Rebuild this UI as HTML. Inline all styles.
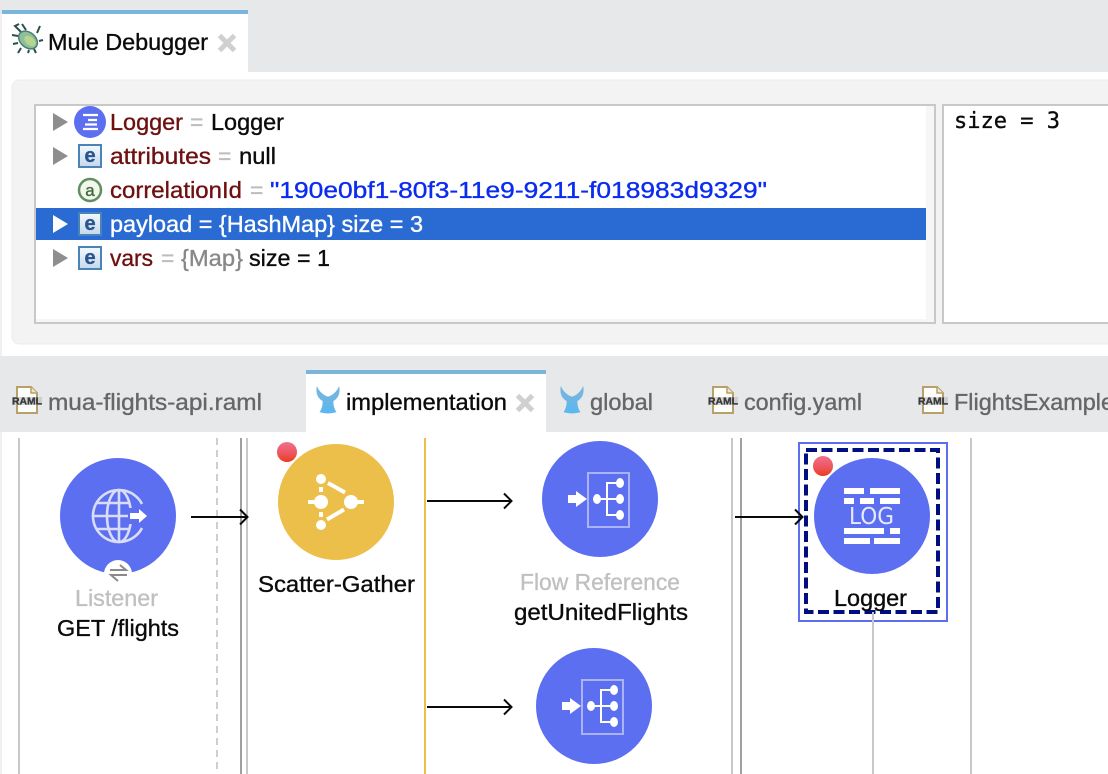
<!DOCTYPE html>
<html><head><meta charset="utf-8"><title>Mule Debugger</title>
<style>
html,body{margin:0;padding:0;background:#fff;width:1108px;height:774px;overflow:hidden}
svg{display:block}
text{font-family:"Liberation Sans",sans-serif;font-size:23px;white-space:pre;fill:currentColor;stroke:currentColor;stroke-width:.35px;color:#0b0b0b}
.k{color:#6e1010}.q{color:#bdbdbd}.b{color:#0b0b0b}.g{color:#666}.w{color:#fff}.s{color:#0b2cf0}.m{color:#888}.l{color:#c0c0c0}
</style></head><body>
<svg xmlns="http://www.w3.org/2000/svg" width="1108" height="774" viewBox="0 0 1108 774">
<defs>
<linearGradient id="mg" x1="0" y1="0" x2="0" y2="1"><stop offset="0" stop-color="#7fb4d8"/><stop offset="1" stop-color="#58b8f2"/></linearGradient>
<linearGradient id="rd" x1="0" y1="0" x2="0" y2="1"><stop offset="0" stop-color="#f07090"/><stop offset=".55" stop-color="#ee5560"/><stop offset="1" stop-color="#ea3a20"/></linearGradient>
<linearGradient id="eg" x1="0" y1="0" x2="0" y2="1"><stop offset="0" stop-color="#f4f8fc"/><stop offset="1" stop-color="#c4d8ea"/></linearGradient>
<g id="e"><rect x="1" y="1" width="22" height="22" fill="url(#eg)" stroke="#4a82ba" stroke-width="2"/><text x="12" y="18" text-anchor="middle" style="font-size:20px;font-weight:bold;color:#2a5590">e</text></g>
<g id="raml"><path d="M5 1H19L25 7V27H5Z" fill="#fdfdfb" stroke="#b8a068" stroke-width="2"/><path d="M19 1V7H25" fill="#eee4c8" stroke="#b8a068" stroke-width="1.500"/><rect x="0" y="11" width="30" height="8" fill="#b8b8b8" opacity=".55"/><text x="0" y="18.500" textLength="30" lengthAdjust="spacingAndGlyphs" style="font-size:10px;font-weight:bold;color:#3a3a3a">RAML</text></g>
<path id="mule" d="M1 0C0 6 2 11 7 14C7 18 6 22 4 25C9 26.500 15 26.500 20 25C18 22 17 18 17 14C22 11 24 6 23 0C21 5 16 9 12 10C8 9 3 5 1 0Z" fill="url(#mg)" stroke="#6fb4e2" stroke-width=".6"/>
<g id="fr">
<circle cx="0" cy="0" r="58" fill="#5c6ff0"/>
<rect x="-12" y="-26" width="41" height="54" fill="none" stroke="#a9b3f6" stroke-width="2"/>
<path d="M-32 -4H-24V-8L-13 0L-24 8V4H-32Z" fill="#fff"/>
<path d="M-3 0H20M7 0V-16H20M7 0V16H20" fill="none" stroke="#fff" stroke-width="2"/>
<ellipse cx="-3" cy="0" rx="4" ry="5" fill="#fff"/><ellipse cx="20" cy="-16" rx="4" ry="5" fill="#fff"/><ellipse cx="20" cy="0" rx="4" ry="5" fill="#fff"/><ellipse cx="20" cy="16" rx="4" ry="5" fill="#fff"/>
</g>
</defs>

<!-- top tab bar -->
<rect x="0" y="0" width="1108" height="72" fill="#e7e8ea"/>
<rect x="2" y="10" width="246" height="62" fill="#fff"/>
<rect x="2" y="10" width="246" height="4" fill="#7ab5dc"/>
<rect x="0" y="14" width="2" height="342" fill="#f0f0f0"/>
<g transform="translate(28,40)">
<path d="M-7 -8L-13 -14L-9 -16M-10 -4L-16 -5M9 -7L12 -14M-10 3L-15 4M11 1L15 0M-7 8L-10 13M6 9L8 13M-2 -10L-6 -16M1 10L0 13" stroke="#2b4f4c" stroke-width="2" fill="none"/>
<ellipse cx="0" cy="0" rx="10.500" ry="7.500" transform="rotate(40)" fill="#8fbf9a" stroke="#4a7f78" stroke-width="1.500"/>
<ellipse cx="2" cy="1" rx="6.500" ry="4" transform="rotate(40 2 1)" fill="#b5d68c"/>
</g>
<text x="48" y="50" textLength="160" lengthAdjust="spacingAndGlyphs" class="b">Mule Debugger</text>
<path d="M219.500 35.500L234.500 50.500M234.500 35.500L219.500 50.500" stroke="#d0d0d0" stroke-width="5"/>

<!-- debugger panel -->
<rect x="12" y="80" width="1110" height="264" rx="7" fill="#f3f3f3" stroke="#ececec"/>
<rect x="35" y="105" width="900" height="218" fill="#fff" stroke="#c8c8c8" stroke-width="2"/>
<rect x="926" y="106" width="8" height="216" fill="#f6f6f6"/>
<rect x="36" y="319" width="898" height="3" fill="#f6f6f6"/>
<rect x="943" y="105" width="180" height="218" fill="#fff" stroke="#c8c8c8" stroke-width="2"/>
<rect x="36" y="208" width="890" height="32" fill="#2a6bd3"/>

<!-- tree -->
<path d="M53 113L68 122L53 131Z" fill="#8e8e8e"/>
<path d="M53 147L68 156L53 165Z" fill="#8e8e8e"/>
<path d="M53 215L68 224L53 233Z" fill="#fff"/>
<path d="M53 249L68 258L53 267Z" fill="#8e8e8e"/>

<circle cx="90" cy="122" r="16" fill="#5c6ff0"/>
<path d="M83 115H98M88 120H97M85 124.500H97M83 129H98" stroke="#fff" stroke-width="2.200" fill="none"/>
<use href="#e" x="78" y="144"/>
<circle cx="90" cy="190" r="11" fill="#f2f6ec" stroke="#5f8f5f" stroke-width="2.500"/>
<text x="90" y="196" text-anchor="middle" style="font-size:17px;color:#3d6a3d">a</text>
<use href="#e" x="78" y="212"/>
<use href="#e" x="78" y="246"/>

<text x="110" y="130" textLength="73" lengthAdjust="spacingAndGlyphs" class="k">Logger</text>
<text x="190" y="130" class="q">=</text>
<text x="211" y="130" textLength="73" lengthAdjust="spacingAndGlyphs" class="b">Logger</text>

<text x="110" y="164" textLength="101" lengthAdjust="spacingAndGlyphs" class="k">attributes</text>
<text x="218" y="164" class="q">=</text>
<text x="239" y="164" textLength="37" lengthAdjust="spacingAndGlyphs" class="b">null</text>

<text x="110" y="198" textLength="132" lengthAdjust="spacingAndGlyphs" class="k">correlationId</text>
<text x="250" y="198" class="q">=</text>
<text x="270" y="198" textLength="497" lengthAdjust="spacingAndGlyphs" class="s">"190e0bf1-80f3-11e9-9211-f018983d9329"</text>

<text x="110" y="232" textLength="313" lengthAdjust="spacingAndGlyphs" class="w">payload = {HashMap} size = 3</text>

<text x="110" y="266" textLength="43" lengthAdjust="spacingAndGlyphs" class="k">vars</text>
<text x="161" y="266" class="q">=</text>
<text x="181" y="266" textLength="62" lengthAdjust="spacingAndGlyphs" class="m">{Map}</text>
<text x="249" y="266" textLength="81" lengthAdjust="spacingAndGlyphs" class="b">size = 1</text>

<text x="954" y="128" style="font-family:'DejaVu Sans Mono','Liberation Mono',monospace;font-size:22px" class="b">size = 3</text>

<!-- editor tabs -->
<rect x="0" y="356" width="1108" height="76" fill="#e7e8ea"/>
<rect x="306" y="370" width="240" height="62" fill="#fff"/>
<rect x="306" y="370" width="240" height="4" fill="#7ab5dc"/>
<use href="#raml" x="12" y="386"/>
<text x="48" y="410" textLength="214" lengthAdjust="spacingAndGlyphs" class="g">mua-flights-api.raml</text>
<use href="#mule" x="316" y="387"/>
<text x="346" y="410" textLength="161" lengthAdjust="spacingAndGlyphs" class="b">implementation</text>
<path d="M517.500 395.500L532.500 410.500M532.500 395.500L517.500 410.500" stroke="#d0d0d0" stroke-width="5"/>
<use href="#mule" x="560" y="387"/>
<text x="590" y="410" textLength="63" lengthAdjust="spacingAndGlyphs" class="g">global</text>
<use href="#raml" x="708" y="386"/>
<text x="744" y="410" textLength="118" lengthAdjust="spacingAndGlyphs" class="g">config.yaml</text>
<use href="#raml" x="918" y="386"/>
<text x="954" y="410" textLength="160" lengthAdjust="spacingAndGlyphs" class="g">FlightsExample</text>

<!-- canvas lines -->
<rect x="0" y="432" width="2" height="342" fill="#efefef"/>
<rect x="18" y="438" width="2" height="336" fill="#c8c8c8"/>
<path d="M217 438V774" stroke="#cfcfcf" stroke-width="2" stroke-dasharray="7 5"/>
<rect x="240" y="438" width="2" height="336" fill="#a0a0a0"/>
<rect x="246" y="438" width="2" height="336" fill="#c8c8c8"/>
<rect x="424" y="438" width="2" height="336" fill="#ecbe4a"/>
<rect x="731" y="438" width="2" height="336" fill="#c8c8c8"/>
<rect x="740" y="438" width="2" height="336" fill="#a0a0a0"/>
<rect x="970" y="438" width="2" height="336" fill="#c8c8c8"/>

<!-- arrows -->
<g fill="none" stroke="#0a0a0a" stroke-width="2">
<path d="M191 517H247M240 509.500L247.500 517L240 524.500"/>
<path d="M427 501H512M504 493.500L511.500 501L504 508.500"/>
<path d="M427 707H512M504 699.500L511.500 707L504 714.500"/>
</g>

<!-- listener -->
<circle cx="118" cy="516" r="58" fill="#5c6ff0"/>
<g fill="none" stroke="#d9ddfa" stroke-width="2.600">
<path d="M142 504A26 26 0 1 0 142 528"/>
<ellipse cx="119" cy="516" rx="12" ry="26"/>
<path d="M119 490V542M96 503H130M96 529H130M93 516H130"/>
</g>
<rect x="128" y="508" width="20" height="16" fill="#5c6ff0"/>
<path d="M130 513H139V509L147 516L139 523V519H130Z" fill="#fff"/>
<circle cx="118" cy="574" r="14" fill="#fff"/>
<rect x="60" y="579" width="116" height="12" fill="#fff"/>
<path d="M110 570H126L120 565M127 575H111L118 581" fill="none" stroke="#8a8a8a" stroke-width="2"/>
<text x="75" y="606" textLength="83" lengthAdjust="spacingAndGlyphs" class="l">Listener</text>
<text x="57" y="636" textLength="122" lengthAdjust="spacingAndGlyphs" class="b">GET /flights</text>

<!-- scatter gather -->
<circle cx="336" cy="502" r="58" fill="#ecbe4a"/>
<g fill="#fff"><circle cx="321" cy="502" r="7"/><circle cx="351" cy="502" r="7"/><circle cx="321" cy="479" r="5"/><circle cx="321" cy="525" r="5"/></g>
<path d="M308 502H314M357 502H364M321 487V492M321 512V517M328 483L345 492.500M327 519.500L344 509.500" stroke="#fff" stroke-width="4" fill="none"/>
<circle cx="287" cy="452" r="10" fill="url(#rd)"/>
<text x="258" y="592" textLength="157" lengthAdjust="spacingAndGlyphs" class="b">Scatter-Gather</text>

<!-- flow references -->
<use href="#fr" x="600" y="499"/>
<use href="#fr" x="594" y="706"/>
<text x="520" y="590" textLength="160" lengthAdjust="spacingAndGlyphs" class="l">Flow Reference</text>
<text x="514" y="620" textLength="174" lengthAdjust="spacingAndGlyphs" class="b">getUnitedFlights</text>

<!-- logger -->
<rect x="799" y="443" width="148" height="178" fill="#fff" stroke="#5c6ff0" stroke-width="2"/>
<rect x="806" y="450" width="132" height="162" fill="none" stroke="#000f7f" stroke-width="4" stroke-dasharray="11 4.500"/>
<rect x="735" y="516" width="68" height="2" fill="#0a0a0a"/>
<path d="M795 509.500L802.500 517L795 524.500" fill="none" stroke="#0a0a0a" stroke-width="2"/>
<rect x="872" y="621" width="2" height="153" fill="#c8c8c8"/>
<rect x="872" y="612" width="2" height="9" fill="#c8c8c8"/>
<circle cx="872" cy="516" r="58" fill="#5c6ff0"/>
<g fill="#fff">
<rect x="844" y="488" width="20" height="6"/><rect x="870" y="488" width="30" height="6"/>
<rect x="844" y="498" width="10" height="6"/><rect x="860" y="498" width="14" height="6"/><rect x="880" y="498" width="20" height="6"/>
<rect x="844" y="528" width="40" height="6"/><rect x="890" y="528" width="10" height="6"/>
<rect x="844" y="538" width="26" height="6"/><rect x="874" y="538" width="26" height="6"/>
</g>
<text x="849" y="524" textLength="45" lengthAdjust="spacingAndGlyphs" style="font-size:23px;color:#e6e9ff;stroke-width:0;font-family:'DejaVu Sans','Liberation Sans',sans-serif">LOG</text>
<circle cx="823" cy="466" r="10" fill="url(#rd)"/>
<text x="834" y="606" textLength="73" lengthAdjust="spacingAndGlyphs" class="b">Logger</text>
</svg>
</body></html>
